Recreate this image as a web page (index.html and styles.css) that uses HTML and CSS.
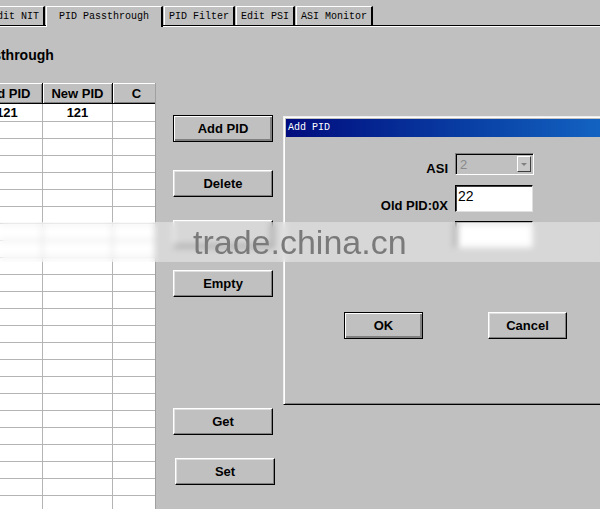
FILE: index.html
```html
<!DOCTYPE html>
<html lang="en">
<head>
    <meta charset="UTF-8">
    <meta name="viewport" content="width=device-width, initial-scale=1.0">
    <title>PID Passthrough</title>
    <link rel="stylesheet" href="styles.css">
</head>
<body>
    <div class="window">
        <div class="tabs">
            <div class="tab">Edit NIT</div>
            <div class="tab active">PID Passthrough</div>
            <div class="tab">PID Filter</div>
            <div class="tab">Edit PSI</div>
            <div class="tab">ASI Monitor</div>
        </div>

        <div class="panel">
            <h1 class="heading">PID Passthrough</h1>

            <div class="workspace">
                <!-- PID list -->
                <div class="grid-view">
                    <table class="pid-table">
                        <thead>
                            <tr><th class="col-old">Old PID</th><th class="col-new">New PID</th><th class="col-ch">C</th></tr>
                        </thead>
                        <tbody>
                            <tr><td>121</td><td>121</td><td></td></tr>
                            <tr><td></td><td></td><td></td></tr>
                            <tr><td></td><td></td><td></td></tr>
                            <tr><td></td><td></td><td></td></tr>
                            <tr><td></td><td></td><td></td></tr>
                            <tr><td></td><td></td><td></td></tr>
                            <tr><td></td><td></td><td></td></tr>
                            <tr><td></td><td></td><td></td></tr>
                            <tr><td></td><td></td><td></td></tr>
                            <tr><td></td><td></td><td></td></tr>
                            <tr><td></td><td></td><td></td></tr>
                            <tr><td></td><td></td><td></td></tr>
                            <tr><td></td><td></td><td></td></tr>
                            <tr><td></td><td></td><td></td></tr>
                            <tr><td></td><td></td><td></td></tr>
                            <tr><td></td><td></td><td></td></tr>
                            <tr><td></td><td></td><td></td></tr>
                            <tr><td></td><td></td><td></td></tr>
                            <tr><td></td><td></td><td></td></tr>
                            <tr><td></td><td></td><td></td></tr>
                            <tr><td></td><td></td><td></td></tr>
                            <tr><td></td><td></td><td></td></tr>
                            <tr><td></td><td></td><td></td></tr>
                            <tr><td></td><td></td><td></td></tr>
                            <tr><td></td><td></td><td></td></tr>
                        </tbody>
                    </table>
                </div>

                <!-- ボタン列 -->
                <div class="actions">
                    <button class="btn default btn-add">Add PID</button>
                    <button class="btn btn-delete">Delete</button>
                    <button class="btn btn-modify" aria-label="Modify"></button>
                    <button class="btn btn-empty">Empty</button>
                    <button class="btn btn-get">Get</button>
                    <button class="btn btn-set">Set</button>
                </div>
            </div>
        </div>

        <!-- Add PID dialog -->
        <div class="dialog">
            <div class="dialog-title">Add PID</div>
            <div class="dialog-body">
                <div class="form-row row-asi">
                    <span class="form-label">ASI</span>
                    <div class="select disabled">
                        <span class="select-value">2</span>
                        <span class="select-arrow"></span>
                    </div>
                </div>
                <div class="form-row row-old">
                    <span class="form-label">Old PID:0X</span>
                    <div class="field">22</div>
                </div>
                <div class="form-row row-new">
                    <span class="form-label"></span>
                    <div class="field"></div>
                </div>
                <div class="dialog-buttons">
                    <button class="btn default btn-ok">OK</button>
                    <button class="btn btn-cancel">Cancel</button>
                </div>
            </div>
        </div>

        <div class="watermark">trade.china.cn</div>
    </div>
</body>
</html>
```

FILE: styles.css
```css
body {
    margin: 0;
    padding: 0;
    background-color: #c0c0c0;
    font-family: "Liberation Sans", Arial, sans-serif;
    font-size: 13px;
    color: #000;
}

.window {
    position: relative;
    width: 600px;
    height: 509px;
    overflow: hidden;
}

/* タブ */
.tabs {
    display: flex;
    align-items: flex-end;
    gap: 1px;
    height: 25px;
    margin-left: -14px;
    border-bottom: 1px solid #000;
}

.tab {
    height: 19px;
    line-height: 19px;
    padding: 0 4px;
    border-top: 1px solid #fff;
    border-left: 1px solid #fff;
    border-right: 2px solid #000;
    box-sizing: border-box;
    font-family: "Liberation Mono", monospace;
    font-size: 10px;
    white-space: nowrap;
    background-color: #c0c0c0;
}

.tab.active {
    position: relative;
    z-index: 1;
    height: 21px;
    margin-bottom: -2px;
    padding: 0 12px 2px;
}

.panel {
    border-top: 1px solid #fff;
}

.heading {
    margin: 20px 0 20px -59px;
    font-size: 14px;
    line-height: 16px;
    font-weight: bold;
    white-space: nowrap;
}

.workspace {
    display: flex;
    align-items: flex-start;
}

/* PID 一覧 */
.grid-view {
    width: 155px;
    height: 430px;
    overflow: hidden;
    background-color: #fff;
    border-right: 1px solid #a0a0a0;
    flex-shrink: 0;
}

.pid-table {
    width: 189px;
    margin-left: -28px;
    border-collapse: separate;
    border-spacing: 0;
    table-layout: fixed;
}

.pid-table th {
    height: 20px;
    padding: 0;
    background-color: #c0c0c0;
    border-right: 1px solid #000;
    border-bottom: 1px solid #000;
    box-shadow: inset 1px 1px #fff, inset -1px -1px #808080;
    font-weight: bold;
    text-align: center;
    white-space: nowrap;
}

.col-old { width: 70px; }
.col-new { width: 69px; }
.col-ch { width: 47px; }

.pid-table td {
    height: 16px;
    padding: 0;
    border-right: 1px solid #b4b4b4;
    border-bottom: 1px solid #b4b4b4;
    font-weight: bold;
    text-align: center;
}

.pid-table tbody tr:first-child td {
    height: 17px;
}

/* ボタン */
.btn {
    display: block;
    width: 100px;
    height: 27px;
    padding: 0;
    background-color: #c0c0c0;
    border: 1px solid;
    border-color: #fff #000 #000 #fff;
    box-shadow: inset -1px -1px #808080, inset 1px 1px #dfdfdf;
    font-family: "Liberation Sans", Arial, sans-serif;
    font-size: 13px;
    font-weight: bold;
    color: #000;
    cursor: pointer;
}

.btn.default {
    border-color: #000;
    box-shadow: inset 1px 1px #fff, inset -2px -2px #808080;
}

.actions {
    display: flex;
    flex-direction: column;
    margin-left: 17px;
}

.btn-add { margin-top: 32px; }
.btn-delete { margin-top: 28px; }
.btn-modify { margin-top: 23px; }
.btn-empty { margin-top: 23px; }
.btn-get { margin-top: 111px; }
.btn-set { margin-top: 23px; margin-left: 2px; }

/* ダイアログ */
.dialog {
    position: absolute;
    left: 283px;
    top: 116px;
    width: 340px;
    height: 289px;
    padding: 2px;
    box-sizing: border-box;
    background-color: #c0c0c0;
    border: 1px solid;
    border-color: #efefef #000 #000 #efefef;
    box-shadow: inset 1px 1px #fff, inset -1px -1px #808080;
}

.dialog-title {
    height: 18px;
    line-height: 18px;
    padding-left: 2px;
    background: linear-gradient(90deg, #000c7e, #0a44a8 60%, #1468c6);
    color: #fff;
    font-family: "Liberation Mono", monospace;
    font-size: 10px;
}

.dialog-body {
    padding-top: 16px;
}

.form-row {
    display: flex;
    align-items: flex-end;
    gap: 7px;
}

.row-old { margin-top: 10px; }
.row-new { margin-top: 9px; }

.form-label {
    width: 162px;
    text-align: right;
    font-weight: bold;
    line-height: 15px;
    margin-bottom: -1px;
}

.select {
    display: flex;
    align-items: stretch;
    justify-content: space-between;
    width: 79px;
    height: 22px;
    padding: 2px;
    box-sizing: border-box;
    border: 1px solid;
    border-color: #808080 #fff #fff #808080;
    box-shadow: inset 1px 1px #000;
}

.select-value {
    padding-left: 2px;
    color: #8a8a8a;
    font-size: 13px;
    line-height: 17px;
}

.select-arrow {
    position: relative;
    width: 14px;
    background-color: #c8c8c8;
    border: 1px solid;
    border-color: #fff #404040 #404040 #fff;
    box-sizing: border-box;
}

.select-arrow::after {
    content: "";
    position: absolute;
    left: 3px;
    top: 6px;
    border-left: 3px solid transparent;
    border-right: 3px solid transparent;
    border-top: 3px solid #808080;
}

.field {
    width: 78px;
    height: 27px;
    padding: 2px 2px 0;
    box-sizing: border-box;
    background-color: #fff;
    border: 1px solid;
    border-color: #000 #e0e0e0 #e0e0e0 #000;
    box-shadow: inset 1px 1px #404040;
    font-size: 14px;
    line-height: 16px;
}

.dialog-buttons {
    display: flex;
    gap: 65px;
    margin: 64px 0 0 58px;
}

.dialog-buttons .btn {
    width: 79px;
}

/* 透かし */
.watermark {
    position: absolute;
    left: 0;
    top: 222px;
    width: 600px;
    height: 40px;
    padding-left: 193px;
    box-sizing: border-box;
    background-color: rgba(255, 255, 255, 0.36);
    backdrop-filter: blur(3px);
    color: #7a7a7a;
    font-size: 34px;
    line-height: 40px;
    z-index: 5;
}
```
